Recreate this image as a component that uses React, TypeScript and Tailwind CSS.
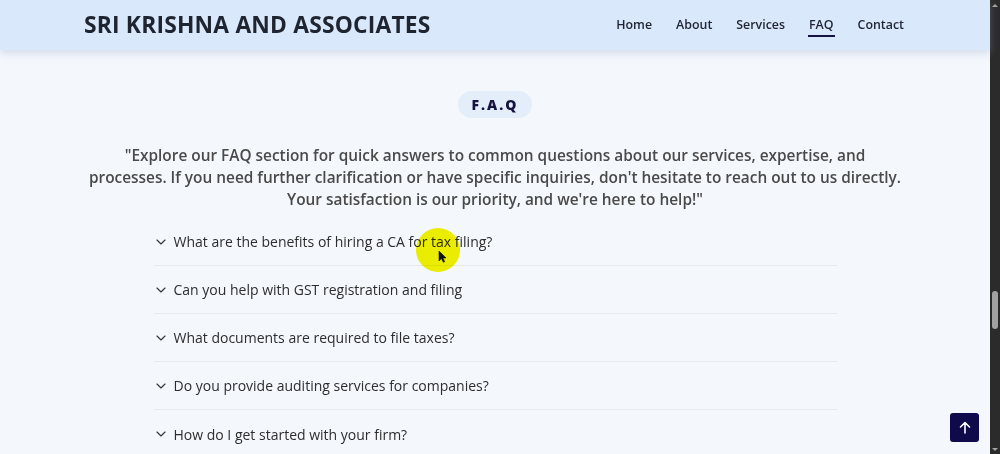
import React from "react";

const questions = [
  "What are the benefits of hiring a CA for tax filing?",
  "Can you help with GST registration and filing",
  "What documents are required to file taxes?",
  "Do you provide auditing services for companies?",
  "How do I get started with your firm?",
];

const links = ["Home", "About", "Services", "FAQ", "Contact"];

function Chevron() {
  return (
    <svg width="10" height="6" viewBox="0 0 10 6" fill="none" className="shrink-0">
      <path d="M1 1l4 4 4-4" stroke="#333" strokeWidth="1.1" strokeLinecap="round" strokeLinejoin="round" />
    </svg>
  );
}

function Scrollbar() {
  return (
    <div className="w-[10px] h-full bg-[#2b2b2b] flex flex-col items-center">
      <div className="h-[10px] flex items-center justify-center">
        <div className="w-0 h-0 border-l-[3px] border-r-[3px] border-b-[3px] border-l-transparent border-r-transparent border-b-[#a3a3a3]" />
      </div>
      <div className="flex-1 w-full relative">
        <div className="absolute left-[2px] right-[2px] top-[281px] h-[38px] rounded-full bg-[#a1a1a1]" />
      </div>
      <div className="h-[10px] flex items-center justify-center">
        <div className="w-0 h-0 border-l-[3px] border-r-[3px] border-t-[3px] border-l-transparent border-r-transparent border-t-[#a3a3a3]" />
      </div>
    </div>
  );
}

export default function App() {
  return (
    <div className="w-[1000px] h-[454px] overflow-hidden flex bg-[#f4f7fc]" style={{ fontFamily: '"Open Sans", "DejaVu Sans", sans-serif' }}>
      <div className="flex-1 flex flex-col relative">
        <header className="h-[50px] shrink-0 bg-[#d9e8fb] shadow-[0_3px_8px_rgba(150,170,200,0.35)] flex items-center justify-between pl-[84px] pr-[86px] relative z-10">
          <h1 className="text-[22.8px] font-bold text-[#1e2430] tracking-[0.2px]">SRI KRISHNA AND ASSOCIATES</h1>
          <nav className="flex items-center gap-[24px] text-[12.4px] font-semibold text-[#1f2433]">
            {links.map((l) => (
              <div key={l} className="relative">
                <span>{l}</span>
                {l === "FAQ" && <div className="absolute -left-[1px] -right-[1px] top-[19px] h-[2px] bg-[#15133f]" />}
              </div>
            ))}
          </nav>
        </header>

        <main className="flex flex-col items-center pt-[41px]">
          <div className="h-[27px] px-[14px] rounded-full bg-[#e4edfa] flex items-center text-[14px] font-extrabold text-[#15133f] tracking-[2px]">
            F.A.Q
          </div>
          <p className="mt-[27px] text-center text-[15.4px] leading-[22px] font-semibold text-[#4a4a4a]">
            "Explore our FAQ section for quick answers to common questions about our services, expertise, and
            <br />
            processes. If you need further clarification or have specific inquiries, don't hesitate to reach out to us directly.
            <br />
            Your satisfaction is our priority, and we're here to help!"
          </p>
          <div className="w-[683px] mt-[7px] flex flex-col">
            {questions.map((q, i) => (
              <div key={q} className={`h-[48px] shrink-0 flex items-center gap-[8px] pl-[2px] ${i < questions.length - 1 ? "border-b border-[#e6e9ee]" : ""}`}>
                <Chevron />
                <span className="text-[14px] text-[#2d2d2d]">{q}</span>
              </div>
            ))}
          </div>
        </main>

        {/* cursor highlight */}
        <div className="absolute left-[416px] top-[228px] w-[44px] h-[44px] rounded-full bg-[#f5f500] mix-blend-multiply" />
        <svg className="absolute left-[438px] top-[250px]" width="9" height="13" viewBox="0 0 9 13">
          <path d="M1 1v10l2.5-2.5 1.8 3.8 1.4-.7-1.8-3.6H8z" fill="#111" stroke="#111" strokeWidth="0.6" />
        </svg>

        <button className="absolute left-[950px] top-[413px] w-[29px] h-[29px] rounded-[3px] bg-[#0f0b4b] flex items-center justify-center">
          <svg width="12" height="13" viewBox="0 0 12 13" fill="none">
            <path d="M6 12V1.5M1.5 6L6 1.5 10.5 6" stroke="white" strokeWidth="1.6" strokeLinecap="round" strokeLinejoin="round" />
          </svg>
        </button>
      </div>
      <Scrollbar />
    </div>
  );
}
